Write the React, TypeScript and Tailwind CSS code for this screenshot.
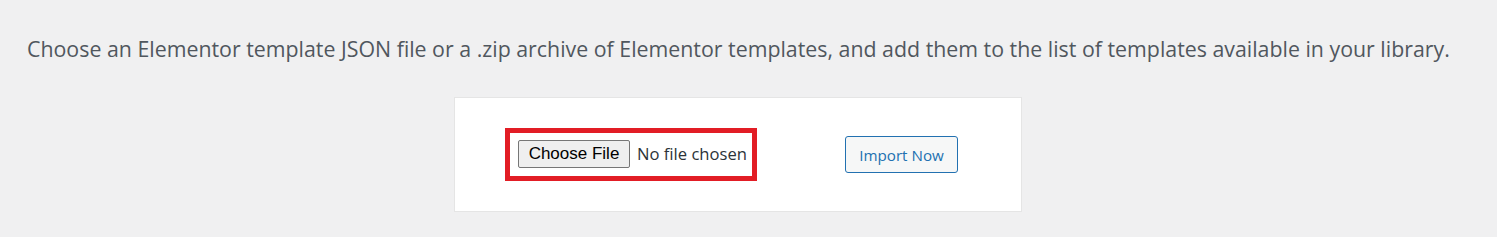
import React from "react";

export default function App() {
  return (
    <div className="h-[237px] w-[1497px] overflow-hidden bg-[#f0f0f1] font-['Open_Sans',sans-serif]">
      <p className="pl-[27px] pt-[35px] text-[21.35px] leading-[28px] text-[#50575e] whitespace-nowrap">
        Choose an Elementor template JSON file or a .zip archive of Elementor templates, and add them to the list of templates available in your library.
      </p>
      <div className="ml-[454px] mt-[34px] flex h-[115px] w-[568px] items-center border border-[#e5e5e5] bg-white pl-[50px]">
        <div className="flex h-[53px] items-center border-[5px] border-[#e21d25] pl-[8px] pr-[6px] pb-[1px]">
          <div className="flex h-[28px] w-[112px] items-center justify-center rounded-[2px] border border-[#767676] bg-[#efefef] font-['Liberation_Sans',sans-serif] text-[17px] text-black">
            Choose File
          </div>
          <span className="ml-[7px] w-[109px] whitespace-nowrap text-[16.6px] text-[#2c3338]">No file chosen</span>
        </div>
        <div className="ml-[88px] flex h-[37px] w-[113px] items-center justify-center rounded-[3px] border border-[#2271b1] bg-[#f6f7f7] pt-[2px] text-[15.2px] text-[#2271b1]">
          Import Now
        </div>
      </div>
    </div>
  );
}
